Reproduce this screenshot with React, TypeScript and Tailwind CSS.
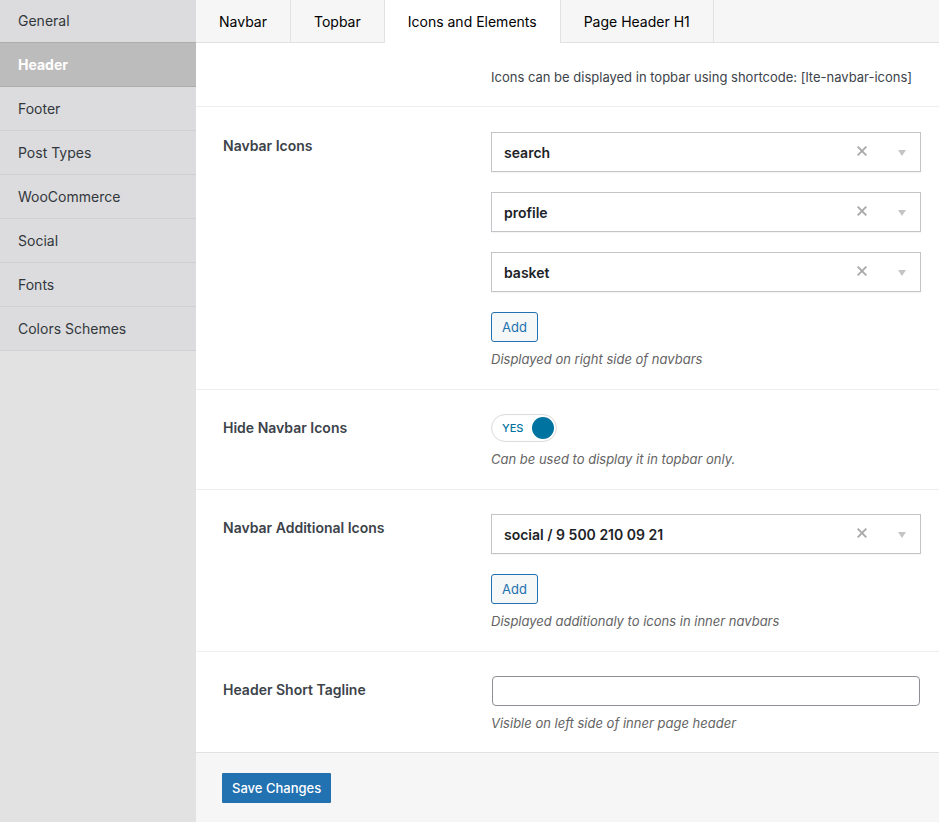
import { useId, useState, type ReactNode } from "react";

const sections = ["General", "Header", "Footer", "Post Types", "WooCommerce", "Social", "Fonts", "Colors Schemes"];
const tabs = ["Navbar", "Topbar", "Icons and Elements", "Page Header H1"];

function Sidebar() {
  return (
    <nav className="w-[196px] shrink-0 bg-[#e2e2e2] text-sm leading-5 text-[#32373c]">
      <ul>
        {sections.map((name, i) => {
          const active = name === "Header";
          const beforeActive = sections[i + 1] === "Header";
          return (
            <li key={name}>
              <a
                href="#"
                aria-current={active ? "page" : undefined}
                className={
                  active
                    ? "block border-b border-[#adadad] bg-[#bcbcbc] px-[18px] pt-3 pb-[11px] font-bold text-white"
                    : beforeActive
                      ? "block border-b border-[#adadad] bg-[#dcdcde] px-[18px] pt-[11px] pb-[11px]"
                      : "block border-b border-[#cfd0d1] bg-[#dcdcde] px-[18px] pt-3 pb-[11px]"
                }
              >
                {name}
              </a>
            </li>
          );
        })}
      </ul>
    </nav>
  );
}

function TabBar() {
  return (
    <div role="tablist" className="flex h-[43px] bg-[#f6f6f6] text-sm leading-5 text-black">
      {tabs.map((name) => {
        const active = name === "Icons and Elements";
        return (
          <button
            key={name}
            type="button"
            role="tab"
            aria-selected={active}
            className={
              active
                ? "border-r border-[#e1e1e1] bg-white px-[23px] pt-px whitespace-nowrap"
                : "border-r border-b border-[#e1e1e1] px-[23px] pt-[2px] whitespace-nowrap"
            }
          >
            {name}
          </button>
        );
      })}
      <div className="flex-1 border-b border-[#e1e1e1]" />
    </div>
  );
}

function Row({ label, htmlFor, className, children }: { label?: string; htmlFor?: string; className: string; children: ReactNode }) {
  return (
    <div className={`flex pr-[18px] pl-[27px] ${className}`}>
      <div className="w-[268px] shrink-0 pt-1 text-sm leading-5 font-semibold text-[#3c434a]">
        {label && <label htmlFor={htmlFor}>{label}</label>}
      </div>
      <div className="min-w-0 flex-1">{children}</div>
    </div>
  );
}

function IconSelect({ id, value }: { id?: string; value: string }) {
  return (
    <div className="relative h-10">
      <select
        id={id}
        aria-label={id ? undefined : value}
        defaultValue={value}
        className="h-full w-full appearance-none border border-[#c3c4c7] bg-white pt-px pr-20 pl-3 text-sm font-semibold text-[#1d2327] shadow-[0_1px_1px_rgba(0,0,0,0.04)]"
      >
        <option>{value}</option>
      </select>
      <button type="button" aria-label={`Remove ${value}`} className="absolute top-[9px] right-[49px] flex size-5 items-center justify-center">
        <svg viewBox="0 0 10 10" className="size-[10px]" fill="none" stroke="#a9a9a9" strokeWidth="1.9">
          <path d="M.7.7 9.3 9.3M9.3.7.7 9.3" />
        </svg>
      </button>
      <svg viewBox="0 0 8 6" className="pointer-events-none absolute top-[18px] right-[15px] h-[6px] w-2" fill="#c4c4c4">
        <path d="M0 0h8L4 6z" />
      </svg>
    </div>
  );
}

function IconList({ id, values }: { id: string; values: string[] }) {
  return (
    <div className="flex flex-col items-stretch gap-5">
      {values.map((value, i) => (
        <IconSelect key={value} id={i === 0 ? id : undefined} value={value} />
      ))}
      <button
        type="button"
        className="h-[30px] self-start rounded-[3px] border border-[#2271b1] bg-[#f6f7f7] px-[10px] pt-[2px] text-[13px] text-[#2271b1]"
      >
        Add
      </button>
    </div>
  );
}

function Description({ children }: { children: ReactNode }) {
  return <p className="mt-2 text-[13px] leading-[18px] text-[#646464] italic">{children}</p>;
}

function Toggle({ id }: { id: string }) {
  const [on, setOn] = useState(true);
  return (
    <label className="relative flex h-7 w-[66px] items-center justify-between rounded-full border border-[#dcdcde] bg-white pr-[2px] pl-[10px] shadow-[inset_0_0_1px_rgba(0,0,0,0.1)]">
      <input
        id={id}
        type="checkbox"
        checked={on}
        onChange={() => setOn(!on)}
        className="absolute inset-0 size-full cursor-pointer opacity-0"
      />
      <span className="text-[11px] leading-4 font-medium text-[#0073a0]">{on ? "YES" : "NO"}</span>
      <span className="size-[22px] rounded-full bg-[#0073a0]" />
    </label>
  );
}

export default function App() {
  const uid = useId();
  const icons = `${uid}-icons`;
  const hide = `${uid}-hide`;
  const extra = `${uid}-extra`;
  const tagline = `${uid}-tagline`;
  return (
    <div className="flex min-h-screen font-[Inter,'Liberation_Sans',sans-serif]">
      <Sidebar />
      <form className="flex min-w-0 flex-1 flex-col bg-white" onSubmit={(e) => e.preventDefault()}>
        <TabBar />
        <Row className="border-b border-[#eeeeee] pt-6 pb-5">
          <p className="pt-px text-[13px] leading-[18px] text-[#3c434a]">
            Icons can be displayed in topbar using shortcode: [lte-navbar-icons]
          </p>
        </Row>
        <Row label="Navbar Icons" htmlFor={icons} className="border-b border-[#eeeeee] pt-[25px] pb-[21px]">
          <IconList id={icons} values={["search", "profile", "basket"]} />
          <Description>Displayed on right side of navbars</Description>
        </Row>
        <Row label="Hide Navbar Icons" htmlFor={hide} className="border-b border-[#eeeeee] pt-6 pb-[21px]">
          <Toggle id={hide} />
          <Description>Can be used to display it in topbar only.</Description>
        </Row>
        <Row label="Navbar Additional Icons" htmlFor={extra} className="border-b border-[#eeeeee] pt-6 pb-[21px]">
          <IconList id={extra} values={["social / 9 500 210 09 21"]} />
          <Description>Displayed additionaly to icons in inner navbars</Description>
        </Row>
        <Row label="Header Short Tagline" htmlFor={tagline} className="pt-6 pb-5">
          <div className="px-px">
            <input id={tagline} type="text" className="block h-[30px] w-full rounded border border-[#8c8f94] bg-white px-2 text-sm" />
          </div>
          <Description>Visible on left side of inner page header</Description>
        </Row>
        <div className="flex-1 border-t border-[#e1e1e1] bg-[#f6f6f6] px-[26px] py-5">
          <button type="submit" className="h-[30px] rounded-[1px] bg-[#2271b1] px-[10px] pt-[2px] text-[13px] font-medium text-white">
            Save Changes
          </button>
        </div>
      </form>
    </div>
  );
}
